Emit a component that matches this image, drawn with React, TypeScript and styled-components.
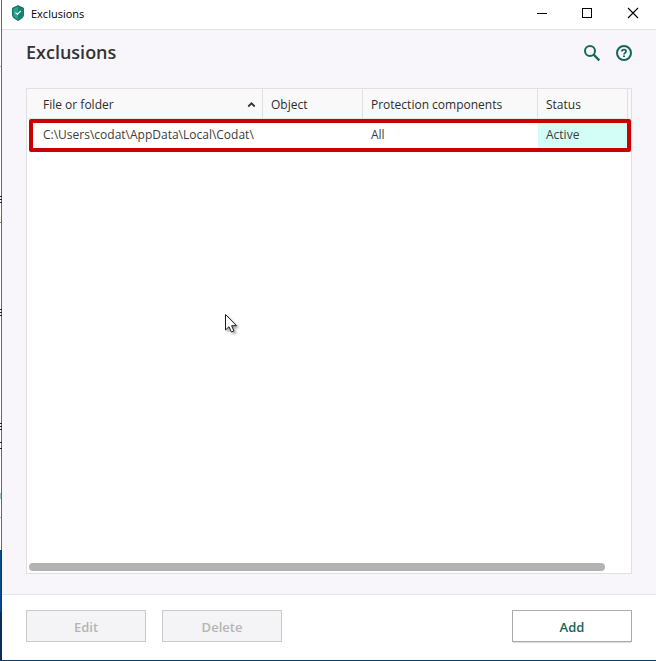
import React from "react";
import styled, { createGlobalStyle } from "styled-components";

const GlobalStyle = createGlobalStyle`
  *, *::before, *::after { box-sizing: border-box; }
  html, body { margin: 0; padding: 0; }
  body {
    font-family: "Open Sans", "Noto Sans", sans-serif;
    font-size: 12px;
    line-height: 16px;
    color: #3c3c3c;
    background: #0b3a66;
  }
  button { font-family: inherit; }
`;

const Desktop = styled.div`
  display: flex;
  min-height: 100vh;
  padding-bottom: 1px;
`;

const DesktopEdge = styled.div`
  flex: 0 0 2px;
  display: flex;
  background: linear-gradient(#fff 0 550px, #0a4a8c 550px 612px, #0a2f57 612px);
`;

const EdgeMarks = styled.svg`
  display: block;
  flex: none;
`;

const Window = styled.div`
  flex: 1;
  min-width: 0;
  display: flex;
  flex-direction: column;
  background: #f8f6fa;
`;

const TitleBar = styled.header`
  display: flex;
  align-items: center;
  height: 30px;
  padding: 0 0 3px 10px;
  background: #fff;
  border-bottom: 1px solid #dfe3e1;
  color: #000;
`;

const AppTitle = styled.span`
  flex: 1;
  margin-left: 7px;
  padding-top: 2px;
  font-size: 11px;
`;

const CaptionButton = styled.button`
  display: flex;
  align-items: center;
  justify-content: center;
  width: 46px;
  height: 26px;
  padding: 0;
  border: 0;
  background: transparent;
  color: #000;
`;

const Content = styled.main`
  flex: 1;
  display: flex;
  flex-direction: column;
  padding: 8px 24px 20px;
`;

const PageHeader = styled.div`
  display: flex;
  align-items: center;
  gap: 12px;
  height: 30px;
  margin-bottom: 20px;
`;

const Heading = styled.h1`
  flex: 1;
  margin: 0;
  padding-bottom: 2px;
  font-size: 18px;
  line-height: 28px;
  font-weight: 600;
  color: #333;
`;

const IconButton = styled.button`
  display: flex;
  align-items: center;
  justify-content: center;
  width: 20px;
  height: 20px;
  padding: 0;
  border: 0;
  background: transparent;
  color: #12695a;

  &:last-child { margin-right: -2px; }
`;

const ListPanel = styled.section`
  position: relative;
  flex: 1;
  display: flex;
  flex-direction: column;
  justify-content: space-between;
  border: 1px solid #e0e0e2;
  background: #fff;
`;

const Table = styled.table`
  width: 100%;
  table-layout: fixed;
  border-collapse: separate;
  border-spacing: 0;
`;

const Column = styled.col<{ $width?: number }>`
  width: ${({ $width }) => ($width ? `${$width}px` : "auto")};
`;

const HeaderCell = styled.th<{ $first?: boolean }>`
  height: 30px;
  padding: 2px 6px 0 ${({ $first }) => ($first ? 16 : 8)}px;
  border-right: 1px solid #e0e0e2;
  border-bottom: 1px solid #e8e8ea;
  background: #f9f9fa;
  text-align: left;
  font-weight: 500;
  color: #2c2c2c;
  white-space: nowrap;

  &:last-child { padding: 0; border-right: 0; }
`;

const HeaderLabel = styled.span`
  display: flex;
  align-items: center;
  justify-content: space-between;
`;

const Cell = styled.td<{ $first?: boolean; $active?: boolean }>`
  height: 32px;
  padding: 0 0 0 ${({ $first }) => ($first ? 16 : 8)}px;
  background: ${({ $active }) => ($active ? "#d3fdf7" : "#fff")};
  white-space: nowrap;

  &:last-child { padding: 0; }
`;

const RowHighlight = styled.div`
  position: absolute;
  top: 30px;
  left: 2px;
  right: 0;
  height: 33px;
  border: 4px solid #cb0000;
  border-radius: 2px;
  pointer-events: none;
`;

const ScrollThumb = styled.div`
  height: 8px;
  margin: 0 26px 2px 2px;
  border-radius: 4px;
  background: #b2b2b2;
`;

const Pointer = styled.svg`
  position: absolute;
  top: 224px;
  left: 197px;
  filter: drop-shadow(2px 2px 1px rgba(0, 0, 0, 0.35));
  pointer-events: none;
`;

const Footer = styled.footer`
  display: flex;
  gap: 16px;
  padding: 15px 24px 18px;
  border-top: 1px solid #e6e6e8;
  background: #fff;
`;

const ActionButton = styled.button`
  width: 120px;
  height: 32px;
  padding: 2px 0 0;
  border: 1px solid #acacac;
  background: #fff;
  box-shadow: 0 2px 1px -1px rgba(0, 0, 0, 0.12);
  color: #1b6358;
  font-size: 13px;
  line-height: 20px;
  font-weight: 600;

  &:last-child { margin-left: auto; }

  &:disabled {
    border-color: #cacacc;
    background: #f4f4f6;
    box-shadow: none;
    color: #b4b4b4;
  }
`;

const ShieldIcon = () => (
  <svg width="12" height="16" viewBox="0 0 14 18" preserveAspectRatio="none" aria-hidden="true">
    <path d="M7 .8 13.200 3.800V11.500C13.200 14 9.500 15.800 7 17.200 4.500 15.800 .8 14 .8 11.500V3.800Z" fill="#23a58b" stroke="#126b5c" strokeWidth="1.400" strokeLinejoin="round" />
    <path d="M7 1.500 12.500 4.200V11.500C12.500 13.600 9.400 15.200 7 16.500Z" fill="#16836f" />
    <path d="M4 8.500 6.300 10.700 10.300 6.700" fill="none" stroke="#fff" strokeWidth="1.300" />
  </svg>
);

const rows = [
  { path: "C:\\Users\\codat\\AppData\\Local\\Codat\\", object: "", components: "All", status: "Active" },
];

const edgeGlyphs = [196, 199, 202, 309, 312, 315, 423, 426, 429, 442, 448];

export default function App() {
  return (
    <Desktop>
      <GlobalStyle />
      <DesktopEdge>
        <EdgeMarks width="2" height="613" aria-hidden="true">
          <rect x="1" width="1" height="550" fill="#68686b" />
          <rect x="1" y="550" width="1" height="63" fill="#083a70" />
          {edgeGlyphs.map((y) => (
            <rect key={y} y={y} width="2" height="1" fill="#222" />
          ))}
          <rect y="222" width="2" height="1" fill="#94704e" />
          <rect y="66" width="1" height="1" fill="#bbb" />
          <rect y="493" width="1" height="6" fill="#a8c8c5" />
          <rect y="517" width="1" height="1" fill="#bbb" />
        </EdgeMarks>
      </DesktopEdge>
      <Window>
        <TitleBar>
          <ShieldIcon />
          <AppTitle>Exclusions</AppTitle>
          <CaptionButton aria-label="Minimize">
            <svg width="12" height="12" viewBox="0 0 12 12"><path d="M2 6.500H12" stroke="currentColor" /></svg>
          </CaptionButton>
          <CaptionButton aria-label="Maximize">
            <svg width="12" height="12" viewBox="0 0 12 12"><rect x="1.500" y="1.500" width="9" height="9" fill="none" stroke="currentColor" /></svg>
          </CaptionButton>
          <CaptionButton aria-label="Close">
            <svg width="12" height="12" viewBox="0 0 12 12"><path d="M1 1 11 11M11 1 1 11" stroke="currentColor" strokeWidth="1.100" /></svg>
          </CaptionButton>
        </TitleBar>
        <Content>
          <PageHeader>
            <Heading>Exclusions</Heading>
            <IconButton aria-label="Search">
              <svg width="20" height="20" viewBox="0 0 20 20" fill="none" stroke="currentColor" strokeWidth="2">
                <circle cx="8" cy="8" r="5" />
                <path d="M11.500 11.500 17.300 17.300" strokeWidth="2.400" />
              </svg>
            </IconButton>
            <IconButton aria-label="Help">
              <svg width="20" height="20" viewBox="0 0 20 20" fill="none" stroke="currentColor" strokeWidth="2">
                <circle cx="10" cy="10" r="7" />
                <path d="M7.900 8.600C7.900 7.200 8.800 6.600 10 6.600S12.100 7.300 12.100 8.400C12.100 9.700 10 9.800 10 11.400" strokeWidth="1.700" />
                <path d="M9 12.400H11V14H9Z" fill="currentColor" stroke="none" />
              </svg>
            </IconButton>
          </PageHeader>
          <ListPanel>
            <Table>
              <colgroup>
                <Column />
                <Column $width={100} />
                <Column $width={175} />
                <Column $width={90} />
                <Column $width={3} />
              </colgroup>
              <thead>
                <tr>
                  <HeaderCell $first scope="col" aria-sort="ascending">
                    <HeaderLabel>
                      File or folder
                      <svg width="9" height="8" viewBox="0 0 9 8" aria-hidden="true"><path d="M1.300 5.500 4.500 2.300 7.700 5.500" fill="none" stroke="#333" strokeWidth="1.800" /></svg>
                    </HeaderLabel>
                  </HeaderCell>
                  <HeaderCell scope="col">Object</HeaderCell>
                  <HeaderCell scope="col">Protection components</HeaderCell>
                  <HeaderCell scope="col">Status</HeaderCell>
                  <HeaderCell as="td" />
                </tr>
              </thead>
              <tbody>
                {rows.map((row) => (
                  <tr key={row.path}>
                    <Cell $first>{row.path}</Cell>
                    <Cell>{row.object}</Cell>
                    <Cell>{row.components}</Cell>
                    <Cell $active>{row.status}</Cell>
                    <Cell />
                  </tr>
                ))}
              </tbody>
            </Table>
            <RowHighlight />
            <ScrollThumb />
            <Pointer width="14" height="22" viewBox="0 0 14 22" aria-hidden="true">
              <path d="M1.500 1.500V17L5 13.700 7.300 19 9.900 17.900 7.600 12.700H12.500Z" fill="#fff" stroke="#1c1c28" strokeWidth="1" />
            </Pointer>
          </ListPanel>
        </Content>
        <Footer>
          <ActionButton disabled>Edit</ActionButton>
          <ActionButton disabled>Delete</ActionButton>
          <ActionButton>Add</ActionButton>
        </Footer>
      </Window>
    </Desktop>
  );
}
